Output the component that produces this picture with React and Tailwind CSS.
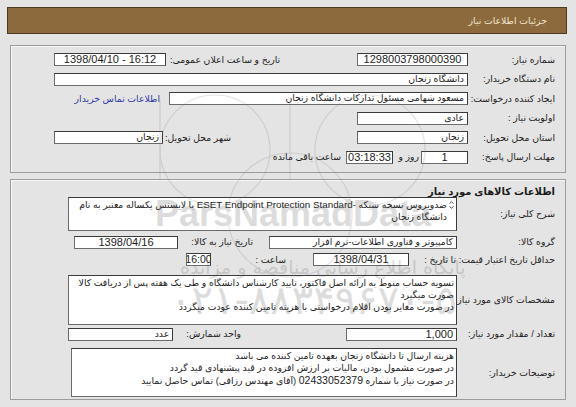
import React from "react";

function Box({ className = "", children, dir }) {
  return (
    <div
      dir={dir}
      className={
        "h-[13px] shrink-0 bg-white border border-[#6b6b6b] border-t-[#3a3a3a] border-r-[#3a3a3a] flex items-center overflow-hidden whitespace-nowrap px-[3px] leading-[11px] " +
        className
      }
    >
      {children}
    </div>
  );
}

function Area({ className = "", children }) {
  return (
    <div
      className={
        "shrink-0 bg-white border border-[#6b6b6b] border-t-[#3a3a3a] border-r-[#3a3a3a] pl-[2px] pt-[1px] leading-[12px] text-right " +
        className
      }
    >
      {children}
    </div>
  );
}

function L({ className = "", children }) {
  return <div className={"shrink-0 whitespace-nowrap " + className}>{children}</div>;
}

export default function App() {
  return (
    <div
      dir="rtl"
      className="relative w-[576px] h-[407px] overflow-hidden bg-[#e4e4e4] text-[9.3px] leading-[12px] text-[#1c1c1c] font-['Liberation_Sans','DejaVu_Sans',sans-serif]"
    >
      <div className="pt-[7px] pr-[9px] pl-[7px]">
        <div className="h-[27px] bg-[#8c6a3e] border border-[#4b3a24] flex items-center pr-[19px] text-[#f3e7cf]">
          جزئیات اطلاعات نیاز
        </div>
      </div>

      {/* section 1 */}
      <div className="mt-[11px] mx-[10px] h-[128px] border border-[#9c9c9c] shadow-[inset_1px_1px_0_#f7f7f7] pt-[4px]">
        <div className="flex items-center h-[19.5px]">
          <L className="w-[97px] pr-[10px]">شماره نیاز:</L>
          <Box className="w-[111px] justify-center text-[11px]" dir="ltr">1298003798000390</Box>
          <div className="flex-1 flex items-center justify-end gap-[4px] pl-[43px]">
            <L>تاریخ و ساعت اعلان عمومی:</L>
            <Box className="w-[112px] justify-center text-[11px]" dir="ltr">1398/04/10 - 16:12</Box>
          </div>
        </div>
        <div className="flex items-center h-[19.5px]">
          <L className="w-[97px] pr-[10px]">نام دستگاه خریدار:</L>
          <Box className="w-[414px]">دانشگاه زنجان</Box>
        </div>
        <div className="flex items-center h-[19.5px]">
          <L className="w-[97px] pr-[10px]">ایجاد کننده درخواست:</L>
          <Box className="w-[299px]">مسعود شهامی مسئول تدارکات دانشگاه زنجان</Box>
          <L className="mr-[9px] text-[#2e3aa6]">اطلاعات تماس خریدار</L>
        </div>
        <div className="flex items-center h-[19.5px]">
          <L className="w-[97px] pr-[10px]">اولویت نیاز :</L>
          <Box className="w-[111px]">عادی</Box>
        </div>
        <div className="flex items-center h-[19.5px]">
          <L className="w-[97px] pr-[10px]">استان محل تحویل:</L>
          <Box className="w-[111px]">زنجان</Box>
          <div className="flex-1 flex items-center justify-end gap-[2px] pl-[43px]">
            <L>شهر محل تحویل:</L>
            <Box className="w-[109px]">زنجان</Box>
          </div>
        </div>
        <div className="flex items-center h-[19.5px]">
          <L className="w-[97px] pr-[10px]">مهلت ارسال پاسخ:</L>
          <Box className="w-[47px] justify-center text-[11px]">1</Box>
          <L className="mr-[2px] w-[26px]">روز و</L>
          <Box className="w-[47px] justify-center text-[11px]" dir="ltr">03:18:33</Box>
          <L className="mr-[5px]">ساعت باقی مانده</L>
        </div>
      </div>

      {/* section 2 */}
      <div className="mt-[6px] mx-[10px] h-[221px] border border-[#9c9c9c] shadow-[inset_1px_1px_0_#f7f7f7] pt-[6px]">
        <div className="h-[11px] leading-[11px] pr-[10px] font-bold text-[10px]">اطلاعات کالاهای مورد نیاز</div>
        <div className="flex items-center h-[34px]">
          <L className="w-[108px] pr-[10px]">شرح کلی نیاز:</L>
          <Area className="relative w-[389px] h-[34px] pr-[9px]">
            <svg className="absolute right-[2px] top-[3px]" width="5" height="8" viewBox="0 0 5 8">
              <path d="M0.5 2.5 L2.5 0.8 L4.5 2.5" fill="none" stroke="#333" strokeWidth="0.9" />
              <path d="M0.5 5.5 L2.5 7.2 L4.5 5.5" fill="none" stroke="#333" strokeWidth="0.9" />
            </svg>
            ضدویروس نسخه شبکه -<span className="text-[9.8px]">ESET Endpoint Protection Standard</span> با لایسنس یکساله معتبر به نام دانشگاه زنجان
          </Area>
        </div>
        <div className="flex items-center h-[22px]">
          <L className="w-[108px] pr-[10px]">گروه کالا:</L>
          <Box className="w-[188px]">کامپیوتر و فناوری اطلاعات-نرم افزار</Box>
          <L className="mr-[16px] w-[64px]">تاریخ نیاز به کالا:</L>
          <Box className="mr-[11px] w-[104px] justify-center text-[11px]" dir="ltr">1398/04/16</Box>
        </div>
        <div className="flex items-center h-[13px]">
          <L className="w-[108px] pr-[10px]">حداقل تاریخ اعتبار قیمت:</L>
          <L className="w-[48px] pr-[1px]">تا تاریخ :</L>
          <Box className="w-[96px] justify-center text-[11px]" dir="ltr">1398/04/31</Box>
          <L className="mr-[27px] w-[75px]">ساعت :</L>
          <Box className="w-[25px] justify-center px-[1px] text-[10.5px]" dir="ltr">16:00</Box>
        </div>
        <div className="flex items-center h-[50px] mt-[9px]">
          <L className="w-[108px] pr-[10px]">مشخصات کالای مورد نیاز:</L>
          <Area className="w-[389px] h-[50px] pr-[2px]">
            تسویه حساب منوط به ارائه اصل فاکتور، تایید کارشناس دانشگاه و طی یک هفته پس از دریافت کالا صورت میگیرد
            <br />
            در صورت مغایر بودن اقلام درخواستی با هزینه تامین کننده عودت میگردد
          </Area>
        </div>
        <div className="flex items-center h-[18px]">
          <L className="w-[108px] pr-[10px]">تعداد / مقدار مورد نیاز:</L>
          <Box className="w-[111px] text-[11px]">1,000</Box>
          <L className="mr-[105px]">واحد شمارش:</L>
          <Box className="mr-[13px] w-[105px]">عدد</Box>
        </div>
        <div className="flex items-center h-[49px] mt-[5px]">
          <L className="w-[108px] pr-[10px]">توضیحات خریدار:</L>
          <Area className="w-[386px] h-[49px] pr-[2px]">
            هزینه ارسال تا دانشگاه زنجان بعهده تامین کننده می باشد
            <br />
            در صورت مشمول بودن، مالیات بر ارزش افزوده در قید پیشنهادی قید گردد
            <br />
            در صورت نیاز با شماره <span className="text-[10.5px]">02433052379</span> (آقای مهندس رزاقی) تماس حاصل نمایید
          </Area>
        </div>
      </div>

      {/* watermark overlay */}
      <div className="pointer-events-none absolute inset-0 opacity-[0.2]">
        <svg className="absolute left-0 top-0" width="576" height="407" viewBox="0 0 576 407">
          <circle cx="290" cy="215" r="62" fill="none" stroke="#777" strokeWidth="1.2" />
          <circle cx="215" cy="150" r="55" fill="none" stroke="#777" strokeWidth="1.2" />
          <circle cx="370" cy="150" r="55" fill="none" stroke="#777" strokeWidth="1.2" />
          <line x1="160" y1="100" x2="160" y2="180" stroke="#777" strokeWidth="1.2" />
          <line x1="290" y1="100" x2="290" y2="180" stroke="#777" strokeWidth="1.2" />
        </svg>
        <div dir="ltr" className="absolute left-[155px] top-[196px] text-[36px] leading-[36px] font-bold text-[#555] font-['Liberation_Sans',sans-serif]">
          ParsNamadData
        </div>
        <div className="absolute left-[180px] top-[256px] text-[19px] leading-[22px] text-[#555] font-['DejaVu_Sans',sans-serif] whitespace-nowrap">
          پایگاه اطلاع رسانی مناقصه و مزایده
        </div>
        <div dir="ltr" className="absolute left-[170px] top-[280px] text-[40px] leading-[40px] text-[#555] font-['DejaVu_Sans',sans-serif] whitespace-nowrap">
          ۰۲۱-۸۸۳۴۹۶۷۰-۵
        </div>
      </div>
    </div>
  );
}
